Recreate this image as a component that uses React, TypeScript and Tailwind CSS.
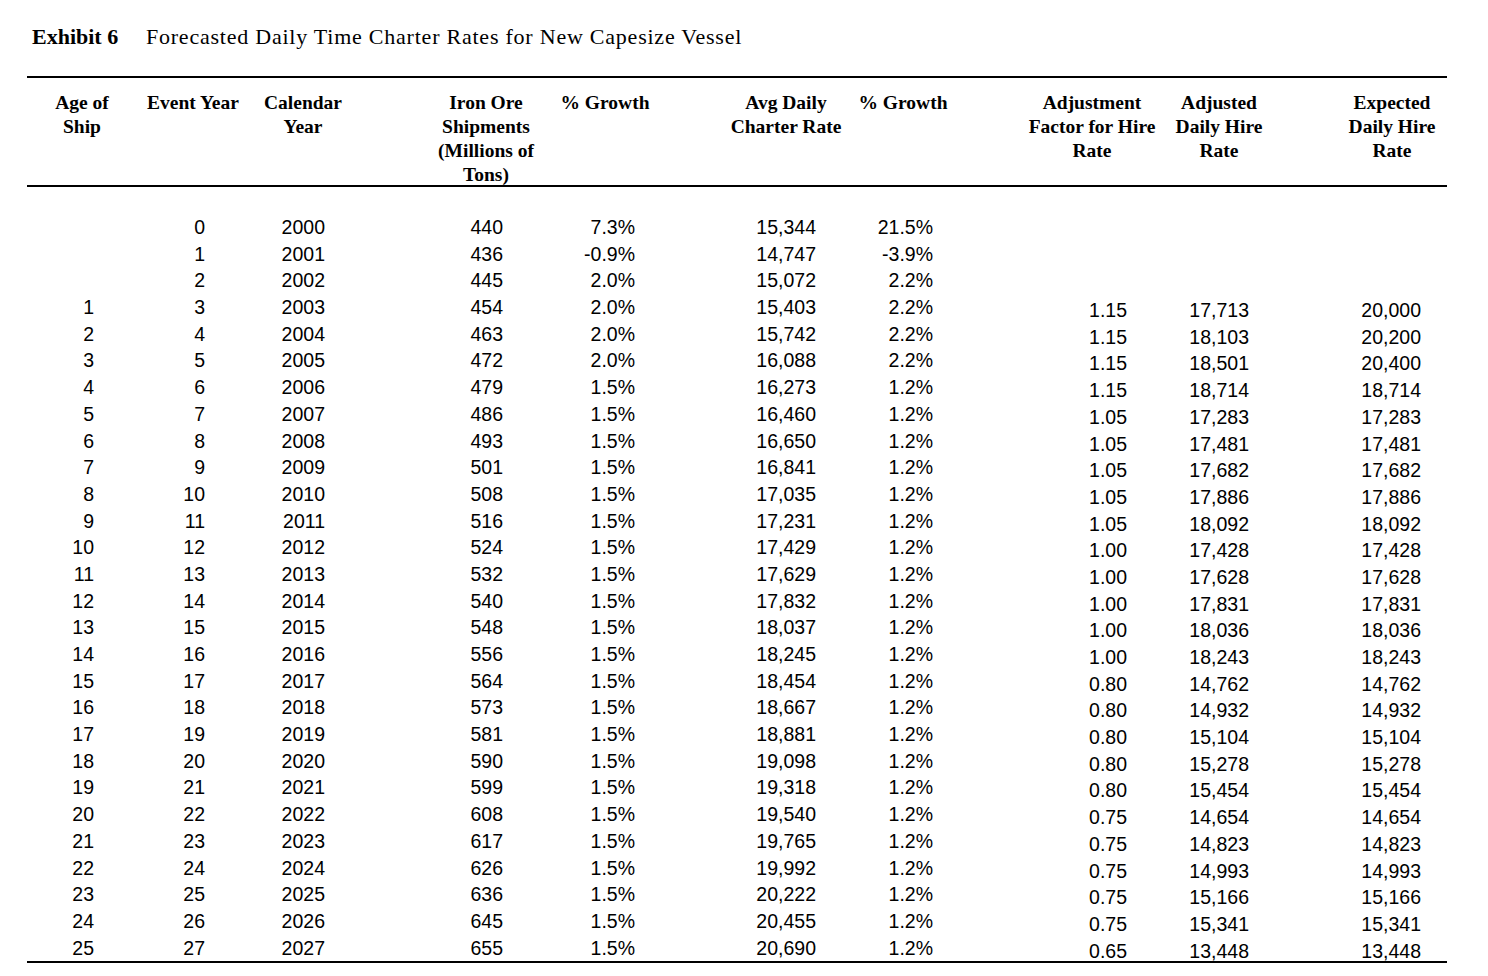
const ironOre = [440, 436, 445, 454, 463, 472, 479, 486, 493, 501, 508, 516, 524, 532, 540, 548, 556, 564, 573, 581, 590, 599, 608, 617, 626, 636, 645, 655];
const avgRate = ["15,344", "14,747", "15,072", "15,403", "15,742", "16,088", "16,273", "16,460", "16,650", "16,841", "17,035", "17,231", "17,429", "17,629", "17,832", "18,037", "18,245", "18,454", "18,667", "18,881", "19,098", "19,318", "19,540", "19,765", "19,992", "20,222", "20,455", "20,690"];
const adjFactor = ["1.15", "1.15", "1.15", "1.15", "1.05", "1.05", "1.05", "1.05", "1.05", "1.00", "1.00", "1.00", "1.00", "1.00", "0.80", "0.80", "0.80", "0.80", "0.80", "0.75", "0.75", "0.75", "0.75", "0.75", "0.65"];
const adjusted = ["17,713", "18,103", "18,501", "18,714", "17,283", "17,481", "17,682", "17,886", "18,092", "17,428", "17,628", "17,831", "18,036", "18,243", "14,762", "14,932", "15,104", "15,278", "15,454", "14,654", "14,823", "14,993", "15,166", "15,341", "13,448"];
const expected = ["20,000", "20,200", "20,400", ...adjusted.slice(3)];

const rows = ironOre.map((ore, i) => ({
  age: i >= 3 ? String(i - 2) : "",
  event: String(i),
  year: String(2000 + i),
  ore: String(ore),
  g1: i === 0 ? "7.3%" : i === 1 ? "-0.9%" : i < 6 ? "2.0%" : "1.5%",
  avg: avgRate[i],
  g2: i === 0 ? "21.5%" : i === 1 ? "-3.9%" : i < 6 ? "2.2%" : "1.2%",
  adj: i >= 3 ? adjFactor[i - 3] : "",
  hire: i >= 3 ? adjusted[i - 3] : "",
  exp: i >= 3 ? expected[i - 3] : "",
}));

const grid = "grid grid-cols-[110px_112px_151px_150px_150px_150px_150px_160px_140px_147px]";

export default function App() {
  return (
    <div className="w-[1488px] h-[976px] bg-white text-black overflow-hidden">
      <div className="pt-[23px] pl-[32px] flex items-baseline text-[22px] leading-[28px] font-['Liberation_Serif',serif]">
        <span className="font-bold w-[114px]">Exhibit 6</span>
        <span className="tracking-[0.035em]">Forecasted Daily Time Charter Rates for New Capesize Vessel</span>
      </div>

      <div className="ml-[27px] mt-[25px] w-[1420px]">
        {/* header */}
        <div className={`${grid} h-[111px] border-t-2 border-b-2 border-black pt-[13px] font-['Liberation_Serif',serif] font-bold text-[19.5px] leading-[24px] text-center whitespace-nowrap`}>
          <div>Age of<br />Ship</div>
          <div>Event Year</div>
          <div className="pr-[43px]">Calendar<br />Year</div>
          <div className="pl-[22px]">Iron Ore<br />Shipments<br />(Millions of<br />Tons)</div>
          <div className="pr-[40px]">% Growth</div>
          <div className="pl-[22px]">Avg Daily<br />Charter Rate</div>
          <div className="pr-[44px]">% Growth</div>
          <div className="pl-[24px]">Adjustment<br />Factor for Hire<br />Rate</div>
          <div className="pr-[22px]">Adjusted<br />Daily Hire<br />Rate</div>
          <div className="pl-[37px]">Expected<br />Daily Hire<br />Rate</div>
        </div>

        {/* body */}
        <div className="pt-[27px] border-b-2 border-black font-['Liberation_Sans',Arial,sans-serif] text-[19.5px] leading-[26.7px] text-right">
          {rows.map((r) => (
            <div key={r.event} className={`${grid} h-[26.7px]`}>
              <div className="pr-[43px]">{r.age}</div>
              <div className="pr-[44px]">{r.event}</div>
              <div className="pr-[75px]">{r.year}</div>
              <div className="pr-[47px]">{r.ore}</div>
              <div className="pr-[65px]">{r.g1}</div>
              <div className="pr-[34px]">{r.avg}</div>
              <div className="pr-[67px]">{r.g2}</div>
              <div className="pr-[33px] pt-[3px]">{r.adj}</div>
              <div className="pr-[51px] pt-[3px]">{r.hire}</div>
              <div className="pr-[26px] pt-[3px]">{r.exp}</div>
            </div>
          ))}
        </div>
      </div>
    </div>
  );
}
